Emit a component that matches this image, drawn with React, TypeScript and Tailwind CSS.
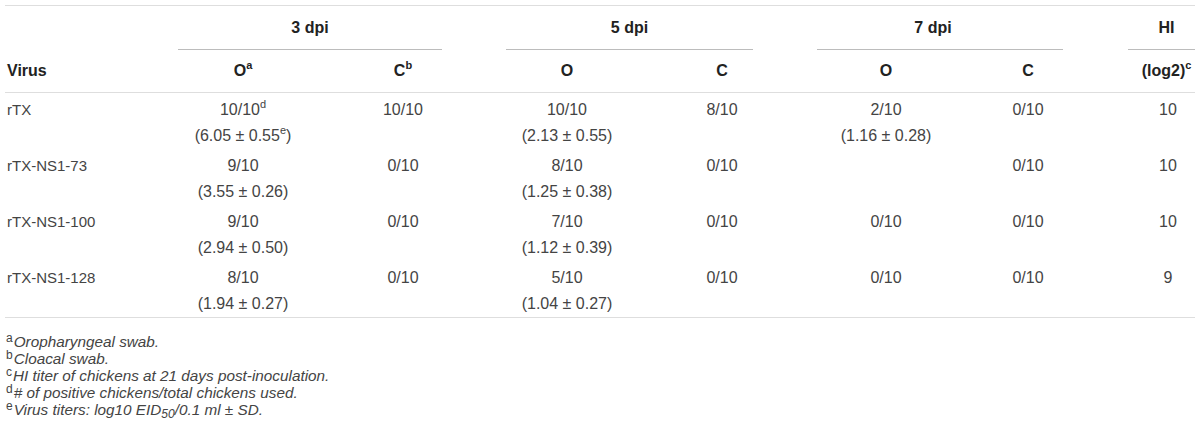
import React from "react";

const cols = "grid grid-cols-[173px_130px_190px_138px_172px_156px_128px_103px]";

type Row = {
  virus: string;
  o3: [React.ReactNode, React.ReactNode];
  c3: string;
  o5: [string, string];
  c5: string;
  o7: [string, string];
  c7: string;
  hi: string;
};

const rows: Row[] = [
  {
    virus: "rTX",
    o3: [
      <>10/10<sup className="text-[11px] -top-[0.6em]">d</sup></>,
      <>(6.05 ± 0.55<sup className="text-[11px] -top-[0.6em]">e</sup>)</>,
    ],
    c3: "10/10",
    o5: ["10/10", "(2.13 ± 0.55)"],
    c5: "8/10",
    o7: ["2/10", "(1.16 ± 0.28)"],
    c7: "0/10",
    hi: "10",
  },
  {
    virus: "rTX-NS1-73",
    o3: ["9/10", "(3.55 ± 0.26)"],
    c3: "0/10",
    o5: ["8/10", "(1.25 ± 0.38)"],
    c5: "0/10",
    o7: ["", ""],
    c7: "0/10",
    hi: "10",
  },
  {
    virus: "rTX-NS1-100",
    o3: ["9/10", "(2.94 ± 0.50)"],
    c3: "0/10",
    o5: ["7/10", "(1.12 ± 0.39)"],
    c5: "0/10",
    o7: ["0/10", ""],
    c7: "0/10",
    hi: "10",
  },
  {
    virus: "rTX-NS1-128",
    o3: ["8/10", "(1.94 ± 0.27)"],
    c3: "0/10",
    o5: ["5/10", "(1.04 ± 0.27)"],
    c5: "0/10",
    o7: ["0/10", ""],
    c7: "0/10",
    hi: "9",
  },
];

function Cell({ lines, className = "" }: { lines: React.ReactNode[]; className?: string }) {
  return (
    <div className={`flex flex-col pt-[4px] text-center text-[16px] ${className}`}>
      {lines.map((l, i) => (
        <div key={i} className="h-[26px] leading-[26px] whitespace-nowrap">
          {l}
        </div>
      ))}
    </div>
  );
}

function FSup({ children }: { children: React.ReactNode }) {
  return <sup className="not-italic text-[12px] leading-none -top-[0.45em] mr-[1px]">{children}</sup>;
}

export default function App() {
  return (
    <div
      className="w-[1200px] h-[435px] bg-white px-[5px] pt-[5px] text-[#444]"
      style={{ fontFamily: '"Liberation Sans", Arial, sans-serif' }}
    >
      <div className="border-t border-[#dedede] text-[15px]">
        {/* group header row */}
        <div className={`${cols} h-[44px] font-bold text-[16px] text-[#222]`}>
          <div />
          <div className="col-span-2 mr-[56px] border-b border-[#bcbcbc] flex items-center justify-center">
            3 dpi
          </div>
          <div className="col-span-2 ml-[8px] mr-[55px] border-b border-[#bcbcbc] flex items-center justify-center">
            5 dpi
          </div>
          <div className="col-span-2 ml-[9px] mr-[29px] border-b border-[#bcbcbc] flex items-center justify-center pr-[14px]">
            7 dpi
          </div>
          <div className="ml-[36px] border-b border-[#bcbcbc] flex items-center justify-center pl-[10px]">
            HI
          </div>
        </div>
        {/* subheader row */}
        <div className={`${cols} h-[43px] items-center font-bold text-[16px] text-[#222] border-b border-[#dedede]`}>
          <div className="pl-[2px]">Virus</div>
          <div className="text-center">
            O<sup className="text-[11px] -top-[0.6em]">a</sup>
          </div>
          <div className="text-center">
            C<sup className="text-[11px] -top-[0.6em]">b</sup>
          </div>
          <div className="text-center">O</div>
          <div className="text-center">C</div>
          <div className="text-center">O</div>
          <div className="text-center">C</div>
          <div className="text-center pl-[46px] whitespace-nowrap">
            (log2)<sup className="text-[11px] -top-[0.6em]">c</sup>
          </div>
        </div>
        {/* data rows */}
        <div className="border-b border-[#dedede]">
          {rows.map((r) => (
            <div key={r.virus} className={`${cols} h-[56px]`}>
              <div className="pt-[4px] pl-[2px] h-[26px] leading-[26px] box-content text-[15px]">{r.virus}</div>
              <Cell lines={r.o3} />
              <Cell lines={[r.c3]} />
              <Cell lines={r.o5} />
              <Cell lines={[r.c5]} />
              <Cell lines={r.o7} />
              <Cell lines={[r.c7]} />
              <Cell lines={[r.hi]} className="pl-[49px]" />
            </div>
          ))}
        </div>
        {/* footnotes */}
        <div className="pt-[15px] pl-[1px] italic text-[15.3px] text-[#444]">
          <div className="h-[17px] leading-[17px]">
            <FSup>a</FSup>Oropharyngeal swab.
          </div>
          <div className="h-[17px] leading-[17px]">
            <FSup>b</FSup>Cloacal swab.
          </div>
          <div className="h-[17px] leading-[17px]">
            <FSup>c</FSup>HI titer of chickens at 21 days post-inoculation.
          </div>
          <div className="h-[17px] leading-[17px]">
            <FSup>d</FSup># of positive chickens/total chickens used.
          </div>
          <div className="h-[17px] leading-[17px]">
            <FSup>e</FSup>Virus titers: log10 EID<sub className="text-[12px] leading-none">50</sub>/0.1 ml ± SD.
          </div>
        </div>
      </div>
    </div>
  );
}
